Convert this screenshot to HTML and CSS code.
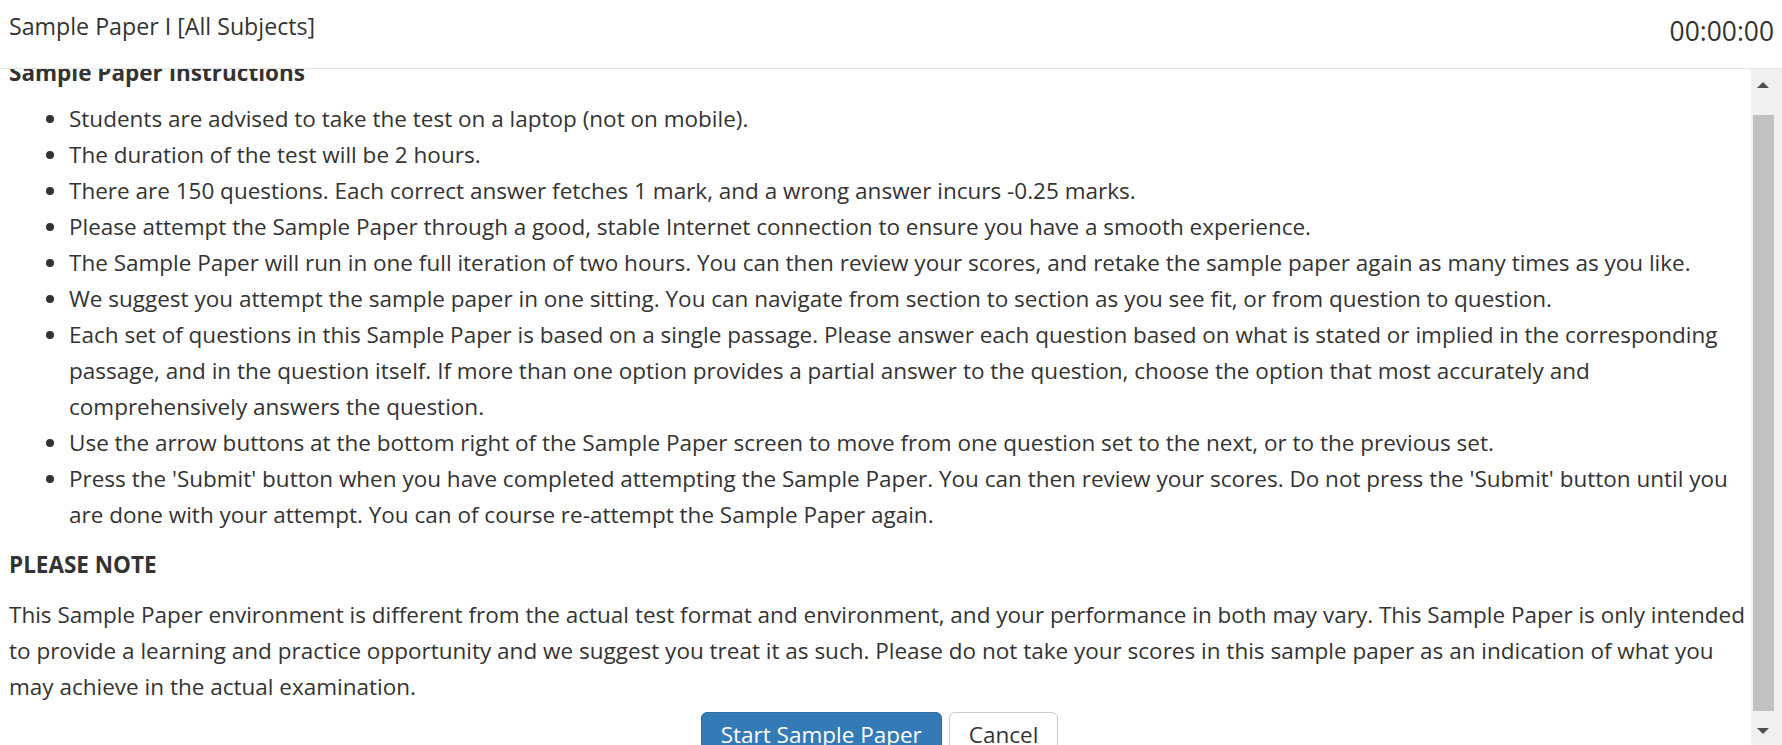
FILE: index.html
```html
<!DOCTYPE html>
<html lang="en">
<head>
<meta charset="utf-8">
<title>Sample Paper I [All Subjects]</title>
<link rel="stylesheet" href="styles.css">
</head>
<body>
<div class="app">
  <header class="topbar">
    <div class="title">Sample Paper I [All Subjects]</div>
    <div class="timer">00:00:00</div>
  </header>
  <div class="main">
    <div class="viewport">
      <div class="content">
        <h4 class="section-title">Sample Paper Instructions</h4>
        <ul class="rules">
          <li>Students are advised to take the test on a laptop (not on mobile).</li>
          <li>The duration of the test will be 2 hours.</li>
          <li>There are 150 questions. Each correct answer fetches 1 mark, and a wrong answer incurs -0.25 marks.</li>
          <li>Please attempt the Sample Paper through a good, stable Internet connection to ensure you have a smooth experience.</li>
          <li>The Sample Paper will run in one full iteration of two hours. You can then review your scores, and retake the sample paper again as many times as you like.</li>
          <li>We suggest you attempt the sample paper in one sitting. You can navigate from section to section as you see fit, or from question to question.</li>
          <li>Each set of questions in this Sample Paper is based on a single passage. Please answer each question based on what is stated or implied in the corresponding passage, and in the question itself. If more than one option provides a partial answer to the question, choose the option that most accurately and comprehensively answers the question.</li>
          <li>Use the arrow buttons at the bottom right of the Sample Paper screen to move from one question set to the next, or to the previous set.</li>
          <li>Press the 'Submit' button when you have completed attempting the Sample Paper. You can then review your scores. Do not press the 'Submit' button until you are done with your attempt. You can of course re-attempt the Sample Paper again.</li>
        </ul>
        <h4 class="note-title">PLEASE NOTE</h4>
        <p class="note">This Sample Paper environment is different from the actual test format and environment, and your performance in both may vary. This Sample Paper is only intended to provide a learning and practice opportunity and we suggest you treat it as such. Please do not take your scores in this sample paper as an indication of what you may achieve in the actual examination.</p>
        <div class="actions">
          <button class="btn btn-primary" type="button">Start Sample Paper</button>
          <button class="btn btn-default" type="button">Cancel</button>
        </div>
      </div>
    </div>
    <div class="scrollbar">
      <div class="sb-btn"><span class="tri tri-up"></span></div>
      <div class="sb-track"><div class="sb-thumb"></div></div>
      <div class="sb-btn"><span class="tri tri-down"></span></div>
    </div>
  </div>
</div>
</body>
</html>
```

FILE: styles.css
```css
* { box-sizing: border-box; }

html, body {
  margin: 0;
  padding: 0;
  background: #fff;
}

body {
  font-family: "Open Sans", "Liberation Sans", sans-serif;
  font-size: 22.5px;
  line-height: 36px;
  color: #333;
}

.app {
  height: 745px;
  display: flex;
  flex-direction: column;
  overflow: hidden;
}

.topbar {
  flex: 0 0 69px;
  display: flex;
  justify-content: space-between;
  align-items: flex-start;
  padding: 0 8px 0 9px;
  border-bottom: 1px solid #e5e5e5;
}

.title {
  font-size: 23.2px;
  line-height: 32px;
  padding-top: 10px;
}

.timer {
  font-size: 26.4px;
  line-height: 36px;
  padding-top: 13px;
}

.main {
  flex: 1;
  display: flex;
  min-height: 0;
}

.viewport {
  flex: 1;
  overflow: hidden;
}

.content {
  margin-top: -14px;
  padding: 0 0 0 9px;
}

.section-title,
.note-title {
  margin: 0;
  font-size: 22.5px;
  font-weight: 700;
  line-height: 36px;
}

.section-title { margin-bottom: 10px; }

.rules {
  margin: 0 0 14px;
  padding-left: 60px;
}

.note-title { margin-bottom: 14px; }

.note {
  margin: 0 0 7px;
}

.actions {
  display: flex;
  justify-content: center;
  gap: 7px;
  padding-right: 1px;
}

.btn {
  font-family: inherit;
  font-size: 22.5px;
  line-height: 32px;
  padding: 6px 19px;
  border-radius: 6px;
  border: 1px solid transparent;
}

.btn-primary {
  background: #337ab7;
  border-color: #2e6da4;
  color: #fff;
}

.btn-default {
  background: #fff;
  border-color: #ccc;
  color: #333;
}

.scrollbar {
  flex: 0 0 31px;
  display: flex;
  flex-direction: column;
  background: #f0f0f0;
}

.sb-btn {
  flex: 0 0 31px;
  display: flex;
  align-items: center;
  justify-content: center;
  padding-right: 7px;
}

.sb-track {
  flex: 1;
  padding: 15px 8px 3px 2px;
  display: flex;
}

.sb-thumb {
  flex: 1;
  background: #c1c1c1;
}

.tri {
  width: 0;
  height: 0;
  border-left: 6px solid transparent;
  border-right: 6px solid transparent;
}

.tri-up { border-bottom: 6px solid #505050; }
.tri-down { border-top: 6px solid #505050; margin-top: 2px; }
```
